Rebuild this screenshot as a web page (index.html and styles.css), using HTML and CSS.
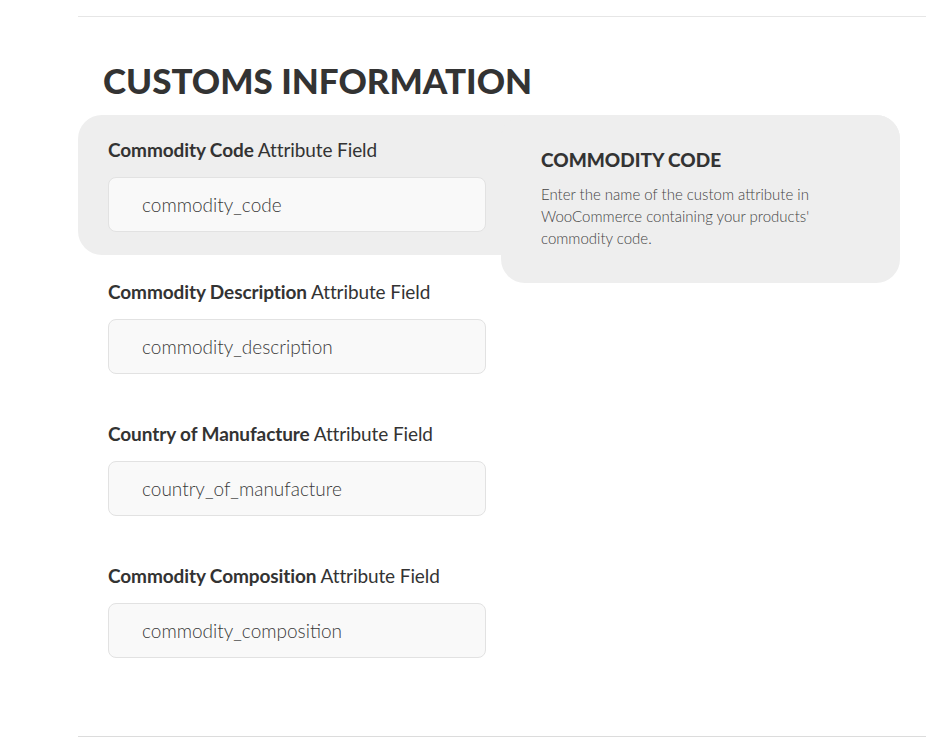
FILE: index.html
```html
<!DOCTYPE html>
<html>
<head>
<meta charset="utf-8">
<link rel="stylesheet" href="styles.css">
</head>
<body>
<div class="page">
  <div class="rule"></div>
  <section class="section">
    <h1 class="title">CUSTOMS INFORMATION</h1>
    <div class="fields">
      <div class="row active">
        <label class="label"><b>Commodity Code</b> Attribute Field</label>
        <div class="input">commodity_code</div>
      </div>
      <div class="row">
        <label class="label"><b>Commodity Description</b> Attribute Field</label>
        <div class="input">commodity_description</div>
      </div>
      <div class="row">
        <label class="label"><b>Country of Manufacture</b> Attribute Field</label>
        <div class="input">country_of_manufacture</div>
      </div>
      <div class="row">
        <label class="label"><b>Commodity Composition</b> Attribute Field</label>
        <div class="input">commodity_composition</div>
      </div>
      <div class="tip">
        <h2 class="tip-title">COMMODITY CODE</h2>
        <p class="tip-text">Enter the name of the custom attribute in WooCommerce containing your products' commodity code.</p>
      </div>
    </div>
  </section>
  <div class="rule bottom"></div>
</div>
</body>
</html>
```
FILE: styles.css
```css
html, body {
  margin: 0;
  padding: 0;
  background: #fff;
}
body {
  font-family: Lato, "Noto Sans", sans-serif;
  color: #333;
}
.page {
  margin-left: 78px;
  width: 848px;
  padding-top: 16px;
}
.rule {
  border-top: 1px solid #e6e6e6;
}
.rule.bottom {
  border-top-color: #dcdcdc;
}
.section {
  padding-bottom: 55px;
}
.title {
  margin: 0 0 7px;
  padding: 35px 0 0 25px;
  font-size: 35px;
  line-height: 56px;
  font-weight: 900;
  color: #333;
}
.fields {
  position: relative;
  width: 822px;
  display: flex;
  flex-direction: column;
  gap: 2px;
}
.row {
  box-sizing: border-box;
  height: 140px;
  padding: 23px 30px 23px;
  display: flex;
  flex-direction: column;
  gap: 15px;
  border-radius: 24px;
}
.row.active {
  background: #eeeeee;
}
.label {
  font-size: 19px;
  line-height: 24px;
  font-weight: 400;
  color: #333;
  letter-spacing: -0.1px;
}
.label b {
  font-weight: 700;
}
.input {
  box-sizing: border-box;
  width: 378px;
  height: 55px;
  background: #f9f9f9;
  border: 1px solid #e2e2e2;
  border-radius: 8px;
  padding: 0 33px;
  display: flex;
  align-items: center;
  font-size: 19px;
  font-weight: 300;
  color: #3a3a3a;
}
.tip {
  position: absolute;
  left: 423px;
  top: 0;
  width: 399px;
  height: 168px;
  box-sizing: border-box;
  background: #eeeeee;
  border-radius: 24px;
  padding: 33px 40px 0 40px;
}
.tip-title {
  margin: 0;
  font-size: 19px;
  line-height: 24px;
  font-weight: 900;
  color: #333;
}
.tip-text {
  margin: 11px 0 0;
  font-size: 15px;
  line-height: 22px;
  font-weight: 300;
  color: #444;
}
```
